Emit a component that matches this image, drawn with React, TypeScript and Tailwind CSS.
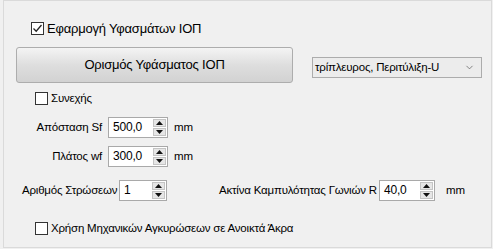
import { ChevronDown } from 'lucide-react';

function CheckBox({ checked, label, big }: { checked?: boolean; label: string; big?: boolean }) {
  return (
    <label className="flex items-center gap-[3px] h-[15px] whitespace-nowrap">
      <span className="w-[13px] h-[13px] shrink-0 border border-[#333333] bg-white flex items-center justify-center">
        {checked && (
          <svg width="11" height="11" viewBox="0 0 11 11">
            <path d="M1.5 5.5 L4.2 8.2 L9.5 2" fill="none" stroke="#222" strokeWidth="1.3" />
          </svg>
        )}
      </span>
      <span
        className={
          big
            ? 'text-[13px] leading-[15px] tracking-[-0.2px]'
            : 'text-[11.5px] leading-[15px] tracking-[-0.2px]'
        }
      >
        {label}
      </span>
    </label>
  );
}

function SpinBox({ value, width }: { value: string; width: number }) {
  return (
    <div
      className="h-[21px] shrink-0 border border-[#a9a9a9] bg-white flex items-stretch"
      style={{ width }}
    >
      <span className="flex-1 pl-[4px] text-[12px] leading-[19px]">{value}</span>
      <div className="w-[15px] flex flex-col gap-[1px] p-[1px]">
        <span className="flex-1 bg-[#e6e6e6] border border-[#c4c4c4] flex items-center justify-center">
          <svg width="7" height="4" viewBox="0 0 7 4"><path d="M3.5 0 L7 4 L0 4 Z" fill="#111" /></svg>
        </span>
        <span className="flex-1 bg-[#e6e6e6] border border-[#c4c4c4] flex items-center justify-center">
          <svg width="7" height="4" viewBox="0 0 7 4"><path d="M0 0 L7 0 L3.5 4 Z" fill="#111" /></svg>
        </span>
      </div>
    </div>
  );
}

export default function App() {
  return (
    <div
      className="w-[493px] h-[249px] overflow-hidden bg-[#f0f0f0] pl-[3px] pr-[1px] text-black"
      style={{ fontFamily: '"Liberation Sans", Arial, sans-serif' }}
    >
      <div className="h-[248px] border border-[#dadada] flex flex-col">
        {/* Enable checkbox */}
        <div className="mt-[20px] ml-[27px]">
          <CheckBox checked big label="Εφαρμογή Υφασμάτων ΙΟΠ" />
        </div>

        {/* Definition button + profile select */}
        <div className="flex items-start mt-[11px] ml-[12px]">
          <button className="w-[277px] h-[36px] shrink-0 rounded-[3px] border border-[#adadad] bg-gradient-to-b from-[#f4f4f4] via-[#dedede] to-[#d2d2d2] text-[13px] tracking-[-0.2px]">
            Ορισμός Υφάσματος ΙΟΠ
          </button>
          <div className="mt-[10px] ml-[19px] w-[170px] h-[21px] shrink-0 border border-[#acacac] bg-[#ececec] flex items-center pl-[2px] pr-[6px]">
            <span className="flex-1 text-[11.5px] tracking-[-0.2px] whitespace-nowrap">τρίπλευρος, Περιτύλιξη-U</span>
            <ChevronDown className="w-[11px] h-[11px] text-[#555]" strokeWidth={1.5} />
          </div>
        </div>

        {/* Continuous checkbox */}
        <div className="mt-[8px] ml-[31px]">
          <CheckBox label="Συνεχής" />
        </div>

        {/* Spacing */}
        <div className="flex items-center mt-[11px] whitespace-nowrap text-[11.5px] tracking-[-0.2px]">
          <span className="w-[98px] shrink-0 text-right">Απόσταση Sf</span>
          <div className="ml-[6px]"><SpinBox value="500,0" width={60} /></div>
          <span className="ml-[6px]">mm</span>
        </div>

        {/* Width */}
        <div className="flex items-center mt-[8px] whitespace-nowrap text-[11.5px] tracking-[-0.2px]">
          <span className="w-[98px] shrink-0 text-right">Πλάτος wf</span>
          <div className="ml-[6px]"><SpinBox value="300,0" width={60} /></div>
          <span className="ml-[6px]">mm</span>
        </div>

        {/* Layers + corner radius */}
        <div className="flex items-center mt-[13px] ml-[18px] whitespace-nowrap text-[11.5px] tracking-[-0.2px]">
          <span className="w-[97px] shrink-0">Αριθμός Στρώσεων</span>
          <SpinBox value="1" width={48} />
          <span className="ml-[52px] w-[160px] shrink-0">Ακτίνα Καμπυλότητας Γωνιών R</span>
          <SpinBox value="40,0" width={56} />
          <span className="ml-[11px]">mm</span>
        </div>

        {/* Mechanical anchorage */}
        <div className="mt-[20px] ml-[31px]">
          <CheckBox label="Χρήση Μηχανικών Αγκυρώσεων σε Ανοικτά Άκρα" />
        </div>
      </div>
    </div>
  );
}
